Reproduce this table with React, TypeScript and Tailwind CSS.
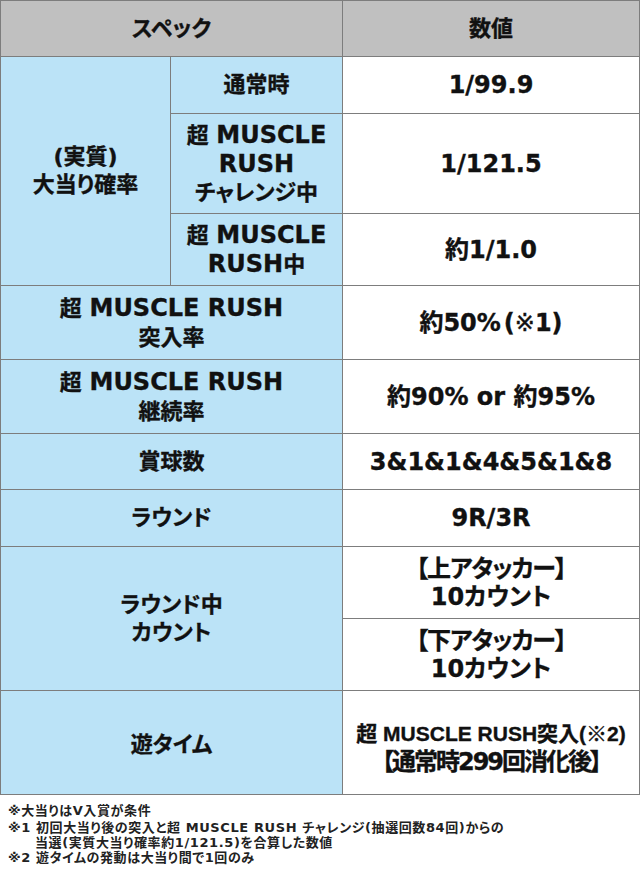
import React from "react";

const L = ({ children }: { children: React.ReactNode }) => (
  <span className="text-[24px]">{children}</span>
);

const Label = ({
  children,
  className = "",
}: {
  children: React.ReactNode;
  className?: string;
}) => (
  <div
    className={`bg-[#bbe3f7] flex flex-col items-center justify-center text-center text-[22px] leading-[28px] ${className}`}
  >
    {children}
  </div>
);

const Val = ({
  children,
  className = "",
}: {
  children: React.ReactNode;
  className?: string;
}) => (
  <div
    className={`bg-white flex flex-col items-center justify-center text-center text-[24px] leading-[28px] whitespace-nowrap ${className}`}
  >
    {children}
  </div>
);

export default function App() {
  return (
    <div className="w-[640px] h-[874px] bg-white text-[#111] font-bold font-['DejaVu_Sans','Noto_Sans_CJK_JP',sans-serif] [font-feature-settings:'palt']">
      <div className="grid w-[640px] bg-[#7d7d7d] p-px gap-px grid-cols-[169px_171px_296px] grid-rows-[55px_56px_99px_71px_73px_73px_55px_56px_71px_71px_103px] [-webkit-text-stroke:0.35px_#111]">
        <div className="col-span-2 bg-[#c0c0c0] flex items-center justify-center text-[22px]">
          スペック
        </div>
        <div className="bg-[#c0c0c0] flex items-center justify-center text-[22px]">
          数値
        </div>

        <Label className="row-span-3 leading-[27px]">
          <div>(実質)</div>
          <div>大当り確率</div>
        </Label>
        <Label>通常時</Label>
        <Val>1/99.9</Val>
        <Label>
          <div>
            超 <L>MUSCLE</L>
          </div>
          <div>
            <L>RUSH</L>
          </div>
          <div>チャレンジ中</div>
        </Label>
        <Val>1/121.5</Val>
        <Label>
          <div>
            超 <L>MUSCLE</L>
          </div>
          <div>
            <L>RUSH</L>中
          </div>
        </Label>
        <Val>約1/1.0</Val>

        <Label className="col-span-2 leading-[29px]">
          <div>
            超 <L>MUSCLE RUSH</L>
          </div>
          <div>突入率</div>
        </Label>
        <Val>
          <div>
            約50%<span className="ml-[3px]">(</span>
            <span className="font-normal">※</span>1)
          </div>
        </Val>

        <Label className="col-span-2 leading-[29px]">
          <div>
            超 <L>MUSCLE RUSH</L>
          </div>
          <div>継続率</div>
        </Label>
        <Val>約90% or 約95%</Val>

        <Label className="col-span-2">賞球数</Label>
        <Val>3&amp;1&amp;1&amp;4&amp;5&amp;1&amp;8</Val>

        <Label className="col-span-2">ラウンド</Label>
        <Val>9R/3R</Val>

        <Label className="col-span-2 row-span-2 text-[21px] leading-[24px]">
          <div>ラウンド中</div>
          <div>カウント</div>
        </Label>
        <Val className="text-[21px] leading-[24px]">
          <div className="tracking-[-1px]">【上アタッカー】</div>
          <div>10カウント</div>
        </Val>
        <Val className="text-[21px] leading-[24px]">
          <div className="tracking-[-1px]">【下アタッカー】</div>
          <div>10カウント</div>
        </Val>

        <Label className="col-span-2 pt-[4px]">遊タイム</Label>
        <Val className="text-[20px] leading-[27px] pt-[10px]">
          <div className="text-[21px] font-['Liberation_Sans','Noto_Sans_CJK_JP',sans-serif]">
            超 MUSCLE RUSH突入(<span className="font-normal">※</span>2)
          </div>
          <div className="tracking-[-2px]">【通常時299回消化後】</div>
        </Val>
      </div>

      <div className="px-[8px] pt-[8px] text-[13px] leading-[15px] tracking-[0.6px] text-[#222]">
        <div className="mb-[2px]">※大当りはV入賞が条件</div>
        <div className="whitespace-nowrap">
          ※1 初回大当り後の突入と超 MUSCLE RUSH チャレンジ(抽選回数84回)からの
        </div>
        <div className="pl-[27px]">
          当選(実質大当り確率約1/121.5)を合算した数値
        </div>
        <div>※2 遊タイムの発動は大当り間で1回のみ</div>
      </div>
    </div>
  );
}
